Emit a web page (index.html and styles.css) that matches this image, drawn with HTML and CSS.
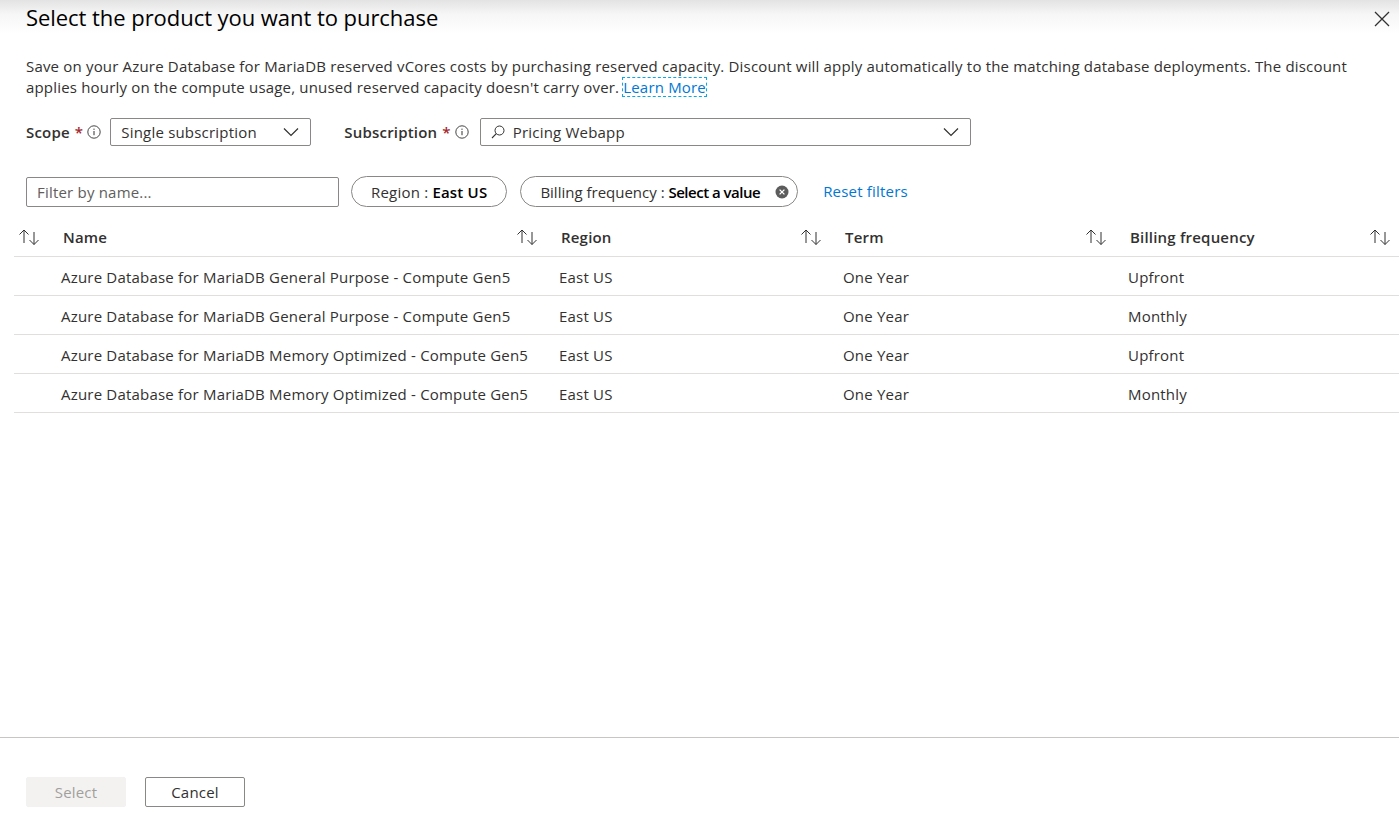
FILE: index.html
```html
<!DOCTYPE html>
<html>
<head>
<meta charset="utf-8">
<link rel="stylesheet" href="styles.css">
</head>
<body>
<div class="page">
  <header class="top">
    <h1 class="title">Select the product you want to purchase</h1>
    <button class="close" aria-label="Close">
      <svg width="16" height="16" viewBox="0 0 16 16"><path d="M1 1L15 15M15 1L1 15" stroke="#323130" stroke-width="1.3" fill="none"/></svg>
    </button>
  </header>
  <main class="body">
    <p class="intro">Save on your Azure Database for MariaDB reserved vCores costs by purchasing reserved capacity. Discount will apply automatically to the matching database deployments. The discount applies hourly on the compute usage, unused reserved capacity doesn't carry over. <a class="learn" href="#">Learn More</a></p>

    <div class="scope-row">
      <label class="field-label">Scope <span class="req">*</span>
        <svg class="info" width="14" height="14" viewBox="0 0 14 14"><circle cx="7" cy="7" r="6.2" stroke="#323130" stroke-width="0.9" fill="none"/><path d="M7 6v4.2" stroke="#323130" stroke-width="1"/><circle cx="7" cy="4.2" r="0.65" fill="#323130"/></svg>
      </label>
      <div class="select scope-select">
        <span>Single subscription</span>
        <svg class="chev" width="16" height="10" viewBox="0 0 16 10"><path d="M1 1.5L8 8.5L15 1.5" stroke="#323130" stroke-width="1.2" fill="none"/></svg>
      </div>
      <label class="field-label sub-label">Subscription <span class="req">*</span>
        <svg class="info" width="14" height="14" viewBox="0 0 14 14"><circle cx="7" cy="7" r="6.2" stroke="#323130" stroke-width="0.9" fill="none"/><path d="M7 6v4.2" stroke="#323130" stroke-width="1"/><circle cx="7" cy="4.2" r="0.65" fill="#323130"/></svg>
      </label>
      <div class="select sub-select">
        <svg class="search" width="14" height="14" viewBox="0 0 14 14"><circle cx="8.5" cy="5.5" r="4.5" stroke="#323130" stroke-width="1" fill="none"/><path d="M5.3 8.7L1 13" stroke="#323130" stroke-width="1.1"/></svg>
        <span>Pricing Webapp</span>
        <svg class="chev" width="16" height="10" viewBox="0 0 16 10"><path d="M1 1.5L8 8.5L15 1.5" stroke="#323130" stroke-width="1.2" fill="none"/></svg>
      </div>
    </div>

    <div class="filter-row">
      <input class="filter" type="text" placeholder="Filter by name...">
      <div class="pill">Region : <b>East US</b></div>
      <div class="pill pill-x">Billing frequency : <b>Select a value</b>
        <svg class="xcircle" width="14" height="14" viewBox="0 0 14 14"><circle cx="7" cy="7" r="6.5" fill="#5c5c5c"/><path d="M4.6 4.6L9.4 9.4M9.4 4.6L4.6 9.4" stroke="#fff" stroke-width="1.3"/></svg>
      </div>
      <a class="reset" href="#">Reset filters</a>
    </div>

    <div class="grid">
      <div class="row head">
        <div class="cell"><svg class="sort" width="22" height="18" viewBox="0 0 22 18"><path d="M6 15V2M1.5 6.5L6 2L10.5 6.5M16 4V16.5M11.5 12L16 16.5L20.5 12" stroke="#323130" stroke-width="1" fill="none"/></svg>Name</div>
        <div class="cell"><svg class="sort" width="22" height="18" viewBox="0 0 22 18"><path d="M6 15V2M1.5 6.5L6 2L10.5 6.5M16 4V16.5M11.5 12L16 16.5L20.5 12" stroke="#323130" stroke-width="1" fill="none"/></svg>Region</div>
        <div class="cell"><svg class="sort" width="22" height="18" viewBox="0 0 22 18"><path d="M6 15V2M1.5 6.5L6 2L10.5 6.5M16 4V16.5M11.5 12L16 16.5L20.5 12" stroke="#323130" stroke-width="1" fill="none"/></svg>Term</div>
        <div class="cell"><svg class="sort" width="22" height="18" viewBox="0 0 22 18"><path d="M6 15V2M1.5 6.5L6 2L10.5 6.5M16 4V16.5M11.5 12L16 16.5L20.5 12" stroke="#323130" stroke-width="1" fill="none"/></svg>Billing frequency</div>
        <div class="cell"><svg class="sort" width="22" height="18" viewBox="0 0 22 18"><path d="M6 15V2M1.5 6.5L6 2L10.5 6.5M16 4V16.5M11.5 12L16 16.5L20.5 12" stroke="#323130" stroke-width="1" fill="none"/></svg></div>
      </div>
      <div class="row">
        <div class="cell">Azure Database for MariaDB General Purpose - Compute Gen5</div>
        <div class="cell">East US</div>
        <div class="cell">One Year</div>
        <div class="cell">Upfront</div>
        <div class="cell"></div>
      </div>
      <div class="row">
        <div class="cell">Azure Database for MariaDB General Purpose - Compute Gen5</div>
        <div class="cell">East US</div>
        <div class="cell">One Year</div>
        <div class="cell">Monthly</div>
        <div class="cell"></div>
      </div>
      <div class="row">
        <div class="cell">Azure Database for MariaDB Memory Optimized - Compute Gen5</div>
        <div class="cell">East US</div>
        <div class="cell">One Year</div>
        <div class="cell">Upfront</div>
        <div class="cell"></div>
      </div>
      <div class="row">
        <div class="cell">Azure Database for MariaDB Memory Optimized - Compute Gen5</div>
        <div class="cell">East US</div>
        <div class="cell">One Year</div>
        <div class="cell">Monthly</div>
        <div class="cell"></div>
      </div>
    </div>
  </main>
  <footer class="foot">
    <button class="btn btn-disabled">Select</button>
    <button class="btn btn-cancel">Cancel</button>
  </footer>
</div>
</body>
</html>
```

FILE: styles.css
```css
* { box-sizing: border-box; }
html, body { margin: 0; padding: 0; }
body {
  font-family: "Open Sans", "Noto Sans", "Liberation Sans", sans-serif;
  font-size: 15px;
  letter-spacing: 0.2px;
  color: #323130;
  background: #fff;
  width: 1399px;
  height: 822px;
  overflow: hidden;
}
.page {
  display: flex;
  flex-direction: column;
  height: 822px;
}
.top {
  display: flex;
  align-items: flex-start;
  justify-content: space-between;
  height: 44px;
  padding: 2px 9px 0 26px;
  background: linear-gradient(#e3e3e3 0px, #f6f6f6 14px, #ffffff 34px);
}
.title {
  margin: 0;
  font-size: 22px;
  font-weight: 400;
  letter-spacing: -0.05px;
  line-height: 30px;
  color: #000;
}
.close {
  border: 0;
  background: transparent;
  padding: 0;
  margin-top: 9px;
  width: 16px;
  height: 16px;
  display: flex;
}
.body {
  flex: 1;
  padding: 12px 0 0 0;
}
.intro {
  margin: 0 40px 0 26px;
  line-height: 21px;
  letter-spacing: 0.18px;
  color: #323130;
}
.learn {
  display: inline-block;
  line-height: 18px;
  color: #0078d4;
  text-decoration: none;
  outline: 1px dashed #0aa8e8;
  outline-offset: 0px;
}
.scope-row {
  display: flex;
  align-items: center;
  margin: 20px 0 0 26px;
  height: 28px;
}
.field-label {
  display: flex;
  align-items: center;
  font-weight: 600;
  color: #323130;
}
.req { color: #a4262c; margin: 0 4px 0 5px; }
.info { margin-right: 9px; }
.sub-label { margin-left: 33px; }
.select {
  display: flex;
  align-items: center;
  height: 28px;
  border: 1px solid #8a8886;
  border-radius: 2px;
  padding: 0 11px 0 10px;
}
.scope-select { width: 201px; justify-content: space-between; }
.sub-select { width: 491px; margin-left: 2px; }
.sub-select span { flex: 1; margin-left: 8px; }
.filter-row {
  display: flex;
  align-items: center;
  margin: 30px 0 0 26px;
  height: 31px;
}
.filter {
  width: 313px;
  height: 30px;
  border: 1px solid #8a8886;
  border-radius: 2px;
  padding: 0 10px;
  font-family: inherit;
  font-size: 15px;
  letter-spacing: 0.2px;
  color: #323130;
  outline: none;
}
.filter::placeholder { color: #605e5c; }
.pill {
  display: flex;
  align-items: center;
  height: 31px;
  border: 1px solid #8a8886;
  border-radius: 16px;
  padding: 0 19px;
  margin-left: 12px;
  white-space: pre;
}
.pill b { font-weight: 600; color: #000; }
.pill-x { margin-left: 13px; padding-right: 8px; letter-spacing: 0; }
.pill-x b { letter-spacing: -0.5px; }
.xcircle { margin-left: 15px; }
.reset {
  color: #0078d4;
  text-decoration: none;
  margin-left: 25px;
  margin-top: -2px;
}
.grid {
  margin: 12px 0 0 14px;
}
.row {
  display: grid;
  grid-template-columns: 498px 284px 285px 284px 1fr;
  height: 39px;
  align-items: center;
  border-bottom: 1px solid #e1dfdd;
}
.row .cell {
  padding-left: 47px;
  padding-top: 2px;
  white-space: nowrap;
  color: #323130;
}
.head .cell {
  padding-left: 4px;
  padding-top: 0;
  display: flex;
  align-items: center;
  font-weight: 600;
}
.head { height: 38px; padding-bottom: 1px; }
.sort {
  flex: none;
  margin-right: 23px;
}
.foot {
  border-top: 1px solid #c8c6c4;
  height: 85px;
  display: flex;
  align-items: flex-start;
  padding: 39px 0 0 26px;
  gap: 19px;
}
.btn {
  width: 100px;
  height: 30px;
  font-family: inherit;
  font-size: 15px;
  letter-spacing: 0.2px;
  border-radius: 2px;
  padding: 0;
}
.btn-disabled {
  background: #f3f2f1;
  border: 1px solid #f3f2f1;
  color: #a19f9d;
}
.btn-cancel {
  background: #fff;
  border: 1px solid #8a8886;
  color: #323130;
}
```
